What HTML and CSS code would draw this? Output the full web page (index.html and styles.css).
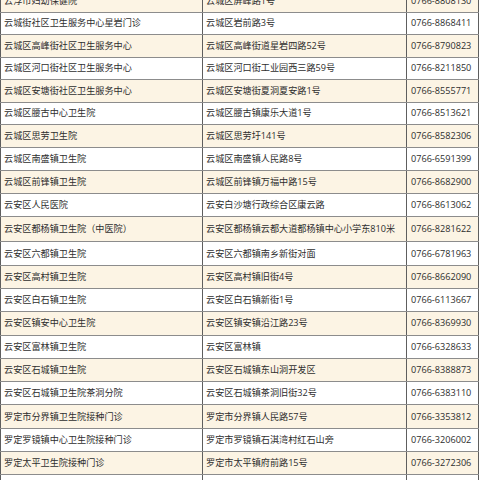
FILE: index.html
```html
<!DOCTYPE html>
<html lang="zh-CN">
<head>
<meta charset="utf-8">
<title>接种门诊</title>
<link rel="stylesheet" href="styles.css">
</head>
<body>
<table class="list">
  <colgroup><col class="c-name"><col class="c-addr"><col class="c-tel"></colgroup>
  <tbody>
    <tr class="alt t"><td>云浮市妇幼保健院</td><td>云城区屏峰路1号</td><td>0766-8808130</td></tr>
    <tr class="t"><td>云城街社区卫生服务中心星岩门诊</td><td>云城区岩前路3号</td><td>0766-8868411</td></tr>
    <tr class="alt t"><td>云城区高峰街社区卫生服务中心</td><td>云城区高峰街道星岩四路52号</td><td>0766-8790823</td></tr>
    <tr class="t"><td>云城区河口街社区卫生服务中心</td><td>云城区河口街工业园西三路59号</td><td>0766-8211850</td></tr>
    <tr class="alt t"><td>云城区安塘街社区卫生服务中心</td><td>云城区安塘街夏洞夏安路1号</td><td>0766-8555771</td></tr>
    <tr class="t"><td>云城区腰古中心卫生院</td><td>云城区腰古镇康乐大道1号</td><td>0766-8513621</td></tr>
    <tr class="alt t"><td>云城区思劳卫生院</td><td>云城区思劳圩141号</td><td>0766-8582306</td></tr>
    <tr><td>云城区南盛镇卫生院</td><td>云城区南盛镇人民路8号</td><td>0766-6591399</td></tr>
    <tr class="alt"><td>云城区前锋镇卫生院</td><td>云城区前锋镇万福中路15号</td><td>0766-8682900</td></tr>
    <tr><td>云安区人民医院</td><td>云安白沙塘行政综合区康云路</td><td>0766-8613062</td></tr>
    <tr class="alt tall"><td>云安区都杨镇卫生院（中医院）</td><td>云安区都杨镇云都大道都杨镇中心小学东810米</td><td>0766-8281622</td></tr>
    <tr><td>云安区六都镇卫生院</td><td>云安区六都镇南乡新街对面</td><td>0766-6781963</td></tr>
    <tr class="alt"><td>云安区高村镇卫生院</td><td>云安区高村镇旧街4号</td><td>0766-8662090</td></tr>
    <tr><td>云安区白石镇卫生院</td><td>云安区白石镇新街1号</td><td>0766-6113667</td></tr>
    <tr class="alt"><td>云安区镇安中心卫生院</td><td>云安区镇安镇沿江路23号</td><td>0766-8369930</td></tr>
    <tr><td>云安区富林镇卫生院</td><td>云安区富林镇</td><td>0766-6328633</td></tr>
    <tr class="alt"><td>云安区石城镇卫生院</td><td>云安区石城镇东山洞开发区</td><td>0766-8388873</td></tr>
    <tr><td>云安区石城镇卫生院茶洞分院</td><td>云安区石城镇茶洞旧街32号</td><td>0766-6383110</td></tr>
    <tr class="alt"><td>罗定市分界镇卫生院接种门诊</td><td>罗定市分界镇人民路57号</td><td>0766-3353812</td></tr>
    <tr><td>罗定罗镜镇中心卫生院接种门诊</td><td>罗定市罗镜镇石淇湾村红石山旁</td><td>0766-3206002</td></tr>
    <tr class="alt"><td>罗定太平卫生院接种门诊</td><td>罗定市太平镇府前路15号</td><td>0766-3272306</td></tr>
    <tr><td>罗定市围底镇卫生院接种门诊</td><td>罗定市围底镇新街</td><td>0766-3572120</td></tr>
  </tbody>
</table>
</body>
</html>
```
FILE: styles.css
```css
html, body {
  margin: 0;
  padding: 0;
  background: #ffffff;
  overflow: hidden;
}
body {
  font-family: "Open Sans", "Noto Sans CJK SC", sans-serif;
  font-size: 9.15px;
  color: #2e2e2e;
}
.list {
  border-collapse: collapse;
  table-layout: fixed;
  width: 478px;
  margin-top: -11px;
}
.c-name { width: 202px; }
.c-addr { width: 204px; }
.c-tel { width: 72px; }
.list td {
  height: 22.3px;
  padding: 0 3px;
  border-top: 1px solid #8c8c8c;
  border-bottom: 1px solid #8c8c8c;
  border-left: 1px solid #5e5e5e;
  border-right: 1px solid #5e5e5e;
  white-space: nowrap;
  overflow: hidden;
  vertical-align: middle;
  line-height: 12px;
}
.list tr.t td { height: 21.5px; }
.list tr.tall td { height: 24px; }
.list tr.alt td { background: #fcf4e4; }
.list td:last-child { padding-left: 4px; }
```
